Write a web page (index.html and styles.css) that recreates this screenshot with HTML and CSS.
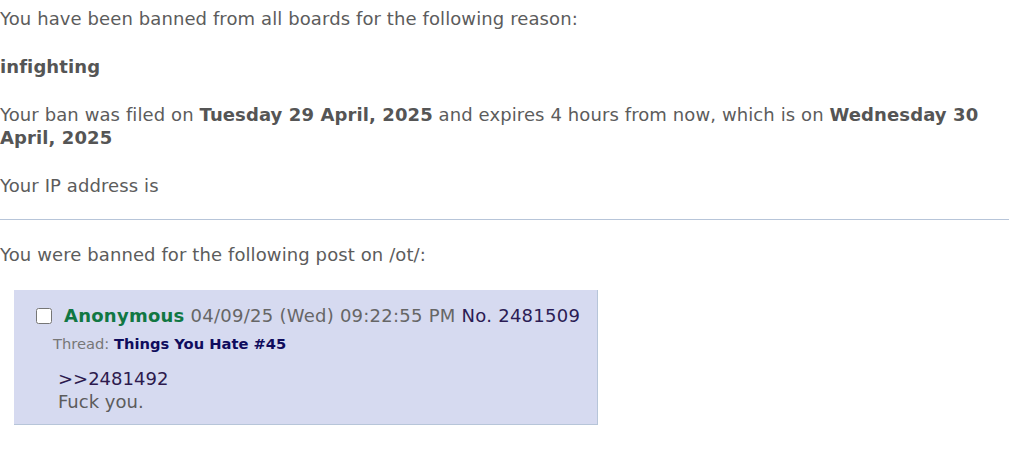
FILE: index.html
```html
<!DOCTYPE html>
<html lang="en">
<head>
    <meta charset="UTF-8">
    <title>Banned</title>
    <link rel="stylesheet" href="styles.css">
</head>
<body>
    <div class="ban">
        <p>You have been banned from all boards for the following reason:</p>
        <p><b>infighting</b></p>
        <p>Your ban was filed on <b>Tuesday 29 April, 2025</b> and expires 4 hours from now, which is on <b>Wednesday 30 April, 2025</b></p>
        <p class="ip">Your IP address is</p>
        <hr>
        <p class="post-title">You were banned for the following post on /ot/:</p>
        <div class="post">
            <div class="post-info">
                <input type="checkbox" class="post-check">
                <span class="name">Anonymous</span>
                <span class="date">04/09/25 (Wed) 09:22:55 PM</span>
                <span class="post-no">No. 2481509</span>
            </div>
            <div class="thread">Thread: <b>Things You Hate #45</b></div>
            <blockquote class="post-msg">
                <span class="quote-link">&gt;&gt;2481492</span><br>
                Fuck you.
            </blockquote>
        </div>
    </div>
</body>
</html>
```

FILE: styles.css
```css
body {
    margin: 0;
    font-family: "DejaVu Sans", Verdana, sans-serif;
    font-size: 18px;
    line-height: 23px;
    color: #5c5c5c;
    background: #fff;
}

.ban p {
    margin: 7px 0 25px;
    letter-spacing: 0.1px;
}

.ban p.ip {
    margin-bottom: 22px;
}

.ban p.post-title {
    margin-bottom: 24px;
}

.ban b {
    color: #555;
}

hr {
    border: none;
    border-top: 1px solid #b7c5d9;
    margin: 0 0 23px;
}

.post {
    display: inline-block;
    margin: 0 0 0 14px;
    padding: 14px 17px 11px 20px;
    background: #d6daf0;
    border-right: 1px solid #b7c5d9;
    border-bottom: 1px solid #b7c5d9;
}

.post-info {
    display: flex;
    align-items: center;
    gap: 6px;
    letter-spacing: 0.25px;
}

.post-check {
    width: 16px;
    height: 16px;
    margin: 0 6px 0 2px;
}

.name {
    color: #117743;
    font-weight: bold;
}

.date {
    color: #666;
}

.post-no {
    color: #2b1c55;
}

.thread {
    margin: 5px 0 0 19px;
    font-size: 14.7px;
    color: #777;
}

.thread b {
    color: #0f0c5d;
}

.post-msg {
    margin: 12px 0 0 24px;
}

.quote-link {
    color: #2d1a4e;
}
```
